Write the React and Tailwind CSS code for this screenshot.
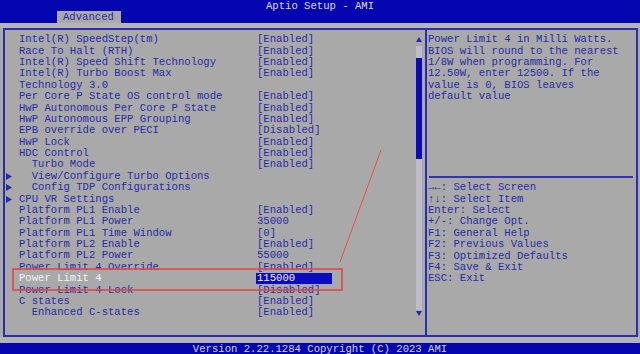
import React from 'react';

const rows = [
  { l: 'Intel(R) SpeedStep(tm)', v: '[Enabled]' },
  { l: 'Race To Halt (RTH)', v: '[Enabled]' },
  { l: 'Intel(R) Speed Shift Technology', v: '[Enabled]' },
  { l: 'Intel(R) Turbo Boost Max', v: '[Enabled]' },
  { l: 'Technology 3.0' },
  { l: 'Per Core P State OS control mode', v: '[Enabled]' },
  { l: 'HwP Autonomous Per Core P State', v: '[Enabled]' },
  { l: 'HwP Autonomous EPP Grouping', v: '[Enabled]' },
  { l: 'EPB override over PECI', v: '[Disabled]' },
  { l: 'HwP Lock', v: '[Enabled]' },
  { l: 'HDC Control', v: '[Enabled]' },
  { l: '  Turbo Mode', v: '[Enabled]' },
  { l: '  View/Configure Turbo Options', sub: true },
  { l: '  Config TDP Configurations', sub: true },
  { l: 'CPU VR Settings', sub: true },
  { l: 'Platform PL1 Enable', v: '[Enabled]' },
  { l: 'Platform PL1 Power', v: '35000' },
  { l: 'Platform PL1 Time Window', v: '[0]' },
  { l: 'Platform PL2 Enable', v: '[Enabled]' },
  { l: 'Platform PL2 Power', v: '55000' },
  { l: 'Power Limit 4 Override', v: '[Enabled]' },
  { l: 'Power Limit 4', v: '115000', sel: true },
  { l: 'Power Limit 4 Lock', v: '[Disabled]' },
  { l: 'C states', v: '[Enabled]' },
  { l: '  Enhanced C-states', v: '[Enabled]' },
];

const help = [
  'Power Limit 4 in Milli Watts.',
  'BIOS will round to the nearest',
  '1/8W when programming. For',
  '12.50W, enter 12500. If the',
  'value is 0, BIOS leaves',
  'default value',
];

const keys = [
  '→←: Select Screen',
  '↑↓: Select Item',
  'Enter: Select',
  '+/-: Change Opt.',
  'F1: General Help',
  'F2: Previous Values',
  'F3: Optimized Defaults',
  'F4: Save & Exit',
  'ESC: Exit',
];

function Row({ r }) {
  return (
    <div className="flex h-[11.375px] items-center">
      <div className="w-[14px] flex items-center pl-[1px]">
        {r.sub && (
          <svg width="6" height="7" viewBox="0 0 6 7">
            <path d="M0 0 L6 3.5 L0 7 Z" fill="#2a2aa8" />
          </svg>
        )}
      </div>
      <div className={'w-[237px] whitespace-pre ' + (r.sel ? 'text-[#f4f4f4]' : '')}>{r.l}</div>
      {r.v && (
        <div className={r.sel ? 'bg-[#0a0ac0] text-[#f4f4f4] w-[76px] h-[11px] leading-[11px] pl-[1px]' : 'pl-[1px]'}>
          {r.v}
        </div>
      )}
    </div>
  );
}

export default function App() {
  return (
    <div
      className="relative w-[640px] h-[354px] overflow-hidden bg-[#a9a9a9] text-[#2a2aa8] text-[10.6px] leading-[11.375px]"
      style={{ fontFamily: '"Liberation Mono", "DejaVu Sans Mono", monospace' }}
    >
      {/* top bar */}
      <div className="h-[23px] bg-[#0606b0] flex flex-col">
        <div className="h-[11px] leading-[13px] text-center text-[#dcdcdc]">Aptio Setup - AMI</div>
        <div className="pl-[57px]">
          <div className="w-[64px] h-[12px] bg-[#a9a9a9] pl-[6px] leading-[13px]">Advanced</div>
        </div>
      </div>

      <div className="h-[5px] bg-[#b4b4b4]" />

      {/* frame */}
      <div className="ml-[3px] mr-[2px] h-[309px] border-2 border-[#2c2cac] flex">
        {/* left panel */}
        <div className="w-[420px] flex">
          <div className="w-[411px] pt-[4.3px]">
            {rows.map((r, i) => (
              <Row key={i} r={r} />
            ))}
          </div>
          <div className="w-[6px] pt-[7px] flex flex-col items-center">
            <svg width="6" height="5" viewBox="0 0 6 5">
              <path d="M3 0 L6 5 L0 5 Z" fill="#2a2aa8" />
            </svg>
            <div className="mt-[4px] w-[6px] h-[264px] bg-[#bcbcca] flex flex-col">
              <div className="h-[12px]" />
              <div className="h-[101px] bg-[#0a0ab8]" />
            </div>
            <svg width="6" height="5" viewBox="0 0 6 5" className="mt-[1px]">
              <path d="M0 0 L6 0 L3 5 Z" fill="#2a2aa8" />
            </svg>
          </div>
        </div>
        <div className="w-[2px] bg-[#2c2cac]" />

        {/* right panel */}
        <div className="flex-1 pl-[1px] pt-[4.3px] flex flex-col">
          <div className="h-[136.5px]">
            {help.map((t, i) => (
              <div key={i} className="h-[11.375px] whitespace-pre">{t}</div>
            ))}
          </div>
          <div className="mt-[5px] mx-[1px] mr-[3px] h-[2px] bg-[#3434ac]" />
          <div className="mt-[4.5px]">
            {keys.map((t, i) => (
              <div key={i} className="h-[11.375px] whitespace-pre">{t}</div>
            ))}
          </div>
        </div>
      </div>

      <div className="h-[6px] bg-[#b4b4b4]" />

      {/* bottom bar */}
      <div className="h-[11px] bg-[#0606b0] text-center text-[#d4d4d4] leading-[12px]">
        Version 2.22.1284 Copyright (C) 2023 AMI
      </div>

      {/* red annotation */}
      <svg className="absolute left-0 top-0 pointer-events-none" width="640" height="354">
        <rect x="13" y="269" width="329" height="21" fill="none" stroke="#e04848" strokeWidth="1.6" />
        <line x1="381" y1="150" x2="340" y2="262" stroke="#e85050" strokeWidth="1" />
      </svg>
    </div>
  );
}
